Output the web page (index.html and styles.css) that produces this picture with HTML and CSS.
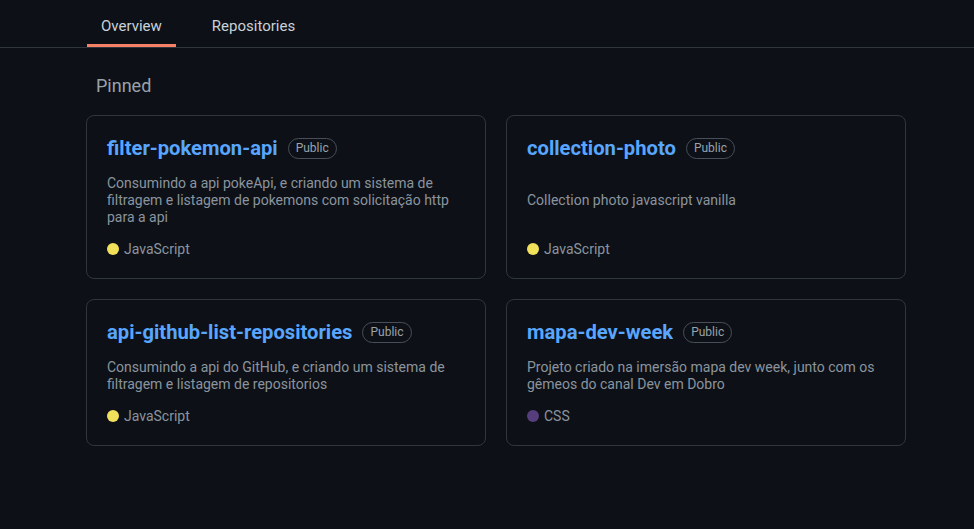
FILE: index.html
```html
<!DOCTYPE html>
<html lang="pt-BR">
<head>
<meta charset="utf-8">
<link rel="stylesheet" href="styles.css">
</head>
<body>
<header class="tabs-bar">
  <nav class="tabs">
    <a class="tab active">Overview</a>
    <a class="tab">Repositories</a>
  </nav>
</header>
<main class="content">
  <h2 class="pinned">Pinned</h2>
  <div class="grid">
    <div class="card">
      <div class="card-head"><span class="repo">filter-pokemon-api</span><span class="badge">Public</span></div>
      <p class="desc"><span>Consumindo a api pokeApi, e criando um sistema de filtragem e listagem de pokemons com solicitação http para a api</span></p>
      <div class="lang"><span class="dot js"></span>JavaScript</div>
    </div>
    <div class="card">
      <div class="card-head"><span class="repo">collection-photo</span><span class="badge">Public</span></div>
      <p class="desc"><span>Collection photo javascript vanilla</span></p>
      <div class="lang"><span class="dot js"></span>JavaScript</div>
    </div>
    <div class="card">
      <div class="card-head"><span class="repo">api-github-list-repositories</span><span class="badge">Public</span></div>
      <p class="desc"><span>Consumindo a api do GitHub, e criando um sistema de filtragem e listagem de repositorios</span></p>
      <div class="lang"><span class="dot js"></span>JavaScript</div>
    </div>
    <div class="card">
      <div class="card-head"><span class="repo">mapa-dev-week</span><span class="badge">Public</span></div>
      <p class="desc"><span>Projeto criado na imersão mapa dev week, junto com os gêmeos do canal Dev em Dobro</span></p>
      <div class="lang"><span class="dot css"></span>CSS</div>
    </div>
  </div>
</main>
</body>
</html>
```

FILE: styles.css
```css
* { box-sizing: border-box; }
html, body {
  margin: 0;
  background: #0d1117;
  font-family: Roboto, "Noto Sans", sans-serif;
  color: #c9d1d9;
}
.tabs-bar {
  border-bottom: 1px solid #30363d;
  padding-left: 87px;
}
.tabs {
  display: flex;
  gap: 22px;
}
.tab {
  display: block;
  padding: 0 14px;
  height: 47px;
  line-height: 52px;
  font-size: 15px;
  color: #c9d1d9;
  border-bottom: 3px solid transparent;
}
.tab.active {
  border-bottom-color: #f78166;
}
.content {
  width: 820px;
  margin-left: 86px;
}
.pinned {
  margin: 26px 0 17px 10px;
  font-size: 18px;
  font-weight: 400;
  line-height: 24px;
  color: #9aa2aa;
}
.grid {
  display: grid;
  grid-template-columns: 1fr 1fr;
  gap: 20px 20px;
}
.card {
  border: 1px solid #30363d;
  border-radius: 8px;
  padding: 20px 20px 19px;
  display: flex;
  flex-direction: column;
}
.card-head {
  display: flex;
  align-items: center;
  height: 24px;
}
.repo {
  font-size: 20.2px;
  font-weight: 700;
  color: #58a6ff;
  margin-right: 10px;
}
.badge {
  font-size: 12px;
  color: #9aa2aa;
  border: 1px solid #484f58;
  border-radius: 12px;
  padding: 0 7px;
  line-height: 19px;
}
.desc {
  flex: 1;
  display: flex;
  align-items: center;
  margin: 15px 0 13px;
  font-size: 14px;
  line-height: 17px;
  color: #8b949e;
}
.lang {
  display: flex;
  align-items: center;
  font-size: 14px;
  line-height: 20px;
  color: #8b949e;
}
.dot {
  width: 12px;
  height: 12px;
  border-radius: 50%;
  margin-right: 5px;
}
.dot.js { background: #f1e05a; }
.dot.css { background: #563d7c; }
```
